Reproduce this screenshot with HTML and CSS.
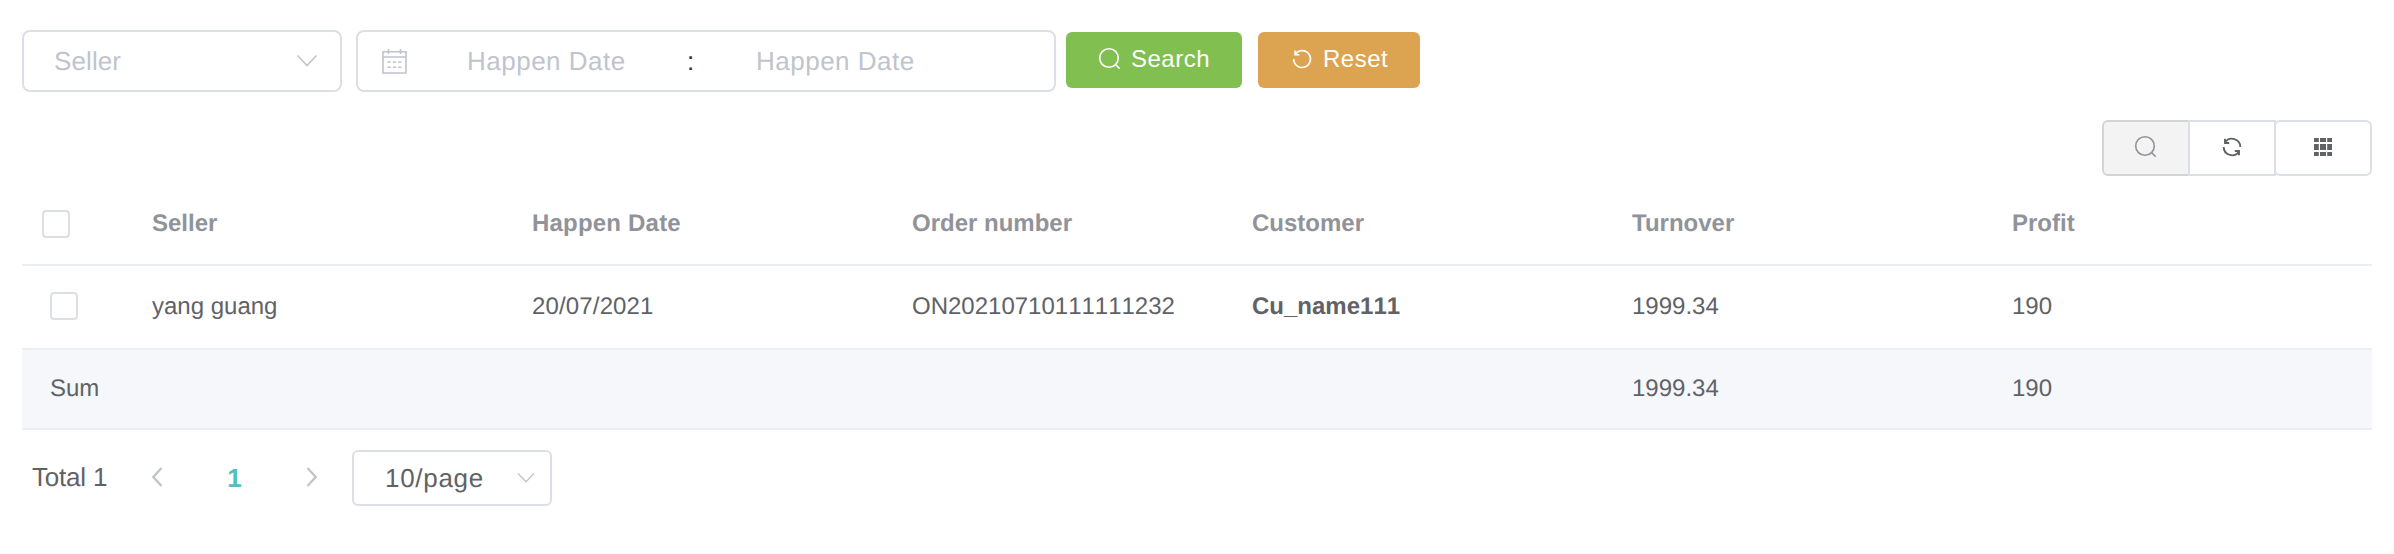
FILE: index.html
```html
<!DOCTYPE html>
<html lang="en">
<head>
<meta charset="utf-8">
<title>Orders</title>
<link rel="stylesheet" href="styles.css">
</head>
<body>
<main class="page">
  <form class="filters">
    <div class="field select">
      <span class="placeholder seller">Seller</span>
      <svg class="chevron" width="22" height="14" viewBox="0 0 22 14"><path d="M1.5 1.5 11 11.5 20.5 1.5"/></svg>
    </div>
    <div class="field range">
      <svg class="calendar" width="26" height="26" viewBox="0 0 26 26"><path d="M2 3.8H25V25H2ZM2 9H25M7.5 1V6M19.5 1V6"/><path d="M6.5 14h3.4M11.8 14h3.4M17.1 14h3.4M6.5 19.3h3.4M11.8 19.3h3.4M17.1 19.3h3.4"/></svg>
      <span class="placeholder date">Happen Date</span>
      <span class="separator">:</span>
      <span class="placeholder date">Happen Date</span>
    </div>
    <button type="button" class="btn search"><svg width="24" height="24" viewBox="0 0 24 24"><circle cx="11" cy="11" r="9.3"/><path d="M17.5 17.5 21.6 21.6"/></svg><span>Search</span></button>
    <button type="button" class="btn reset"><svg width="24" height="24" viewBox="0 0 24 24"><path d="M3.7 12A8.4 8.4 0 1 0 5.4 7M5 3.4V7.7H9.4"/></svg><span>Reset</span></button>
  </form>
  <div class="toolbar">
    <button type="button" class="tool active"><svg width="24" height="24" viewBox="0 0 24 24"><circle cx="11" cy="11" r="9.3"/><path d="M17.5 17.5 21.6 21.6"/></svg></button>
    <button type="button" class="tool"><svg class="sync" width="24" height="24" viewBox="0 0 24 24"><path d="M5 7.6A8.3 8.3 0 0 1 20.3 12M3.7 12A8.3 8.3 0 0 0 19 16.4M5 3.8V8H9.2M19 20.2V16H14.8"/></svg></button>
    <button type="button" class="tool columns"><svg class="grid" width="18" height="18" viewBox="0 0 18 18"><path d="M0 0h4.8v4H0zM6 0h6v4H6zM13.2 0H18v4h-4.8zM0 6h4.8v6H0zM6 6h6v6H6zM13.2 6H18v6h-4.8zM0 14h4.8v4H0zM6 14h6v4H6zM13.2 14H18v4h-4.8z"/></svg></button>
  </div>
  <section class="table">
    <div class="row head">
      <div class="cell check"><span class="box"></span></div>
      <div class="cell">Seller</div><div class="cell title">Happen Date</div><div class="cell">Order number</div><div class="cell">Customer</div><div class="cell">Turnover</div><div class="cell">Profit</div>
    </div>
    <div class="row data">
      <div class="cell check"><span class="box"></span></div>
      <div class="cell">yang guang</div><div class="cell day">20/07/2021</div><div class="cell">ON20210710111111232</div><div class="cell strong">Cu_name111</div><div class="cell">1999.34</div><div class="cell">190</div>
    </div>
    <div class="row sum">
      <div class="cell check">Sum</div>
      <div class="cell"></div><div class="cell"></div><div class="cell"></div><div class="cell"></div><div class="cell">1999.34</div><div class="cell">190</div>
    </div>
  </section>
  <nav class="pagination">
    <span class="total">Total 1</span>
    <svg class="arrow" width="12" height="20" viewBox="0 0 12 20"><path d="M10.5 1 2.3 10 10.5 19"/></svg>
    <span class="current">1</span>
    <svg class="arrow" width="12" height="20" viewBox="0 0 12 20"><path d="M1.5 1 9.7 10 1.5 19"/></svg>
    <div class="size"><span>10/page</span><svg class="chevron small" width="18" height="12" viewBox="0 0 18 12"><path d="M1 1.5 9 9.8 17 1.5"/></svg></div>
  </nav>
</main>
</body>
</html>
```
FILE: styles.css
```css
* { box-sizing: border-box; }
body {
  margin: 0;
  background: #fff;
  color: #606266;
  font-family: "Liberation Sans", Arial, sans-serif;
  font-size: 24px;
  text-rendering: geometricPrecision;
}
svg { display: block; flex: none; fill: none; stroke: currentColor; stroke-width: 1.6; }
button { font: inherit; margin: 0; padding: 0; }
.page { width: 2394px; height: 554px; padding: 30px 22px 0; }

.filters { display: flex; height: 62px; }
.field {
  display: flex;
  align-items: center;
  height: 62px;
  border: 2px solid #dcdfe6;
  border-radius: 8px;
  color: #c0c4cc;
  font-size: 26px;
}
.select { width: 320px; margin-right: 14px; padding: 0 22px 0 30px; justify-content: space-between; }
.range { width: 700px; margin-right: 10px; padding-left: 23px; }
.placeholder { letter-spacing: .5px; }
.seller { letter-spacing: .1px; }
.chevron { color: #c0c4cc; }
.calendar { color: #c0c4cc; }
.date { width: 156px; white-space: nowrap; }
.calendar + .date { margin-left: 60px; }
.separator { width: 133px; padding-left: 2px; text-align: center; color: #303133; }
.btn {
  display: flex;
  align-items: center;
  height: 56px;
  margin-top: 2px;
  padding: 0 0 2px 32px;
  border: 0;
  border-radius: 6px;
  color: #fff;
  letter-spacing: .5px;
}
.btn svg { margin-right: 9px; }
.search { width: 176px; margin-right: 16px; background: #80bf50; }
.reset { width: 162px; background: #dca450; }

.toolbar { display: flex; justify-content: flex-end; margin-top: 28px; height: 56px; }
.tool {
  display: flex;
  align-items: center;
  justify-content: center;
  width: 88px;
  padding-bottom: 2px;
  border: 2px solid #dcdfe6;
  background: #fff;
  color: #606266;
}
.tool + .tool { margin-left: -2px; }
.active { border-color: #d3d4d6; background: #f3f3f3; color: #909399; border-radius: 6px 0 0 6px; }
.columns { width: 98px; border-radius: 6px; }
.sync { stroke-width: 1.9; }
.grid { fill: currentColor; stroke: none; }

.table { margin-top: 6px; }
.row {
  display: grid;
  grid-template-columns: 110px 380px 380px 340px 380px 380px 380px;
  align-items: center;
  border-bottom: 2px solid #ebeef5;
}
.cell { padding-left: 20px; line-height: 34px; white-space: nowrap; }
.check { padding-left: 28px; }
.box { display: block; width: 28px; height: 28px; border: 2px solid #dcdfe6; border-radius: 4px; }
.head { height: 84px; padding-top: 2px; color: #909399; font-weight: 700; }
.head .check { padding-left: 20px; }
.title { letter-spacing: .2px; }
.data { height: 84px; font-kerning: none; }
.data .check { padding-bottom: 2px; }
.day { letter-spacing: .15px; }
.strong { font-weight: 700; }
.sum { height: 80px; background: #f5f7fa; font-kerning: none; }

.pagination { display: flex; align-items: center; height: 56px; margin-top: 20px; padding-left: 10px; font-size: 26px; }
.total { width: 119px; padding-bottom: 2px; letter-spacing: -.2px; }
.arrow { margin-bottom: 2px; color: #c0c4cc; stroke-width: 2.4; }
.current { width: 143px; text-align: center; color: #4dbfc0; font-weight: 700; }
.size {
  display: flex;
  align-items: center;
  justify-content: space-between;
  width: 200px;
  height: 56px;
  margin-left: 34px;
  padding: 0 15px 0 31px;
  border: 2px solid #dcdfe6;
  border-radius: 6px;
  letter-spacing: .7px;
}
.small { stroke-width: 1.3; }
```
